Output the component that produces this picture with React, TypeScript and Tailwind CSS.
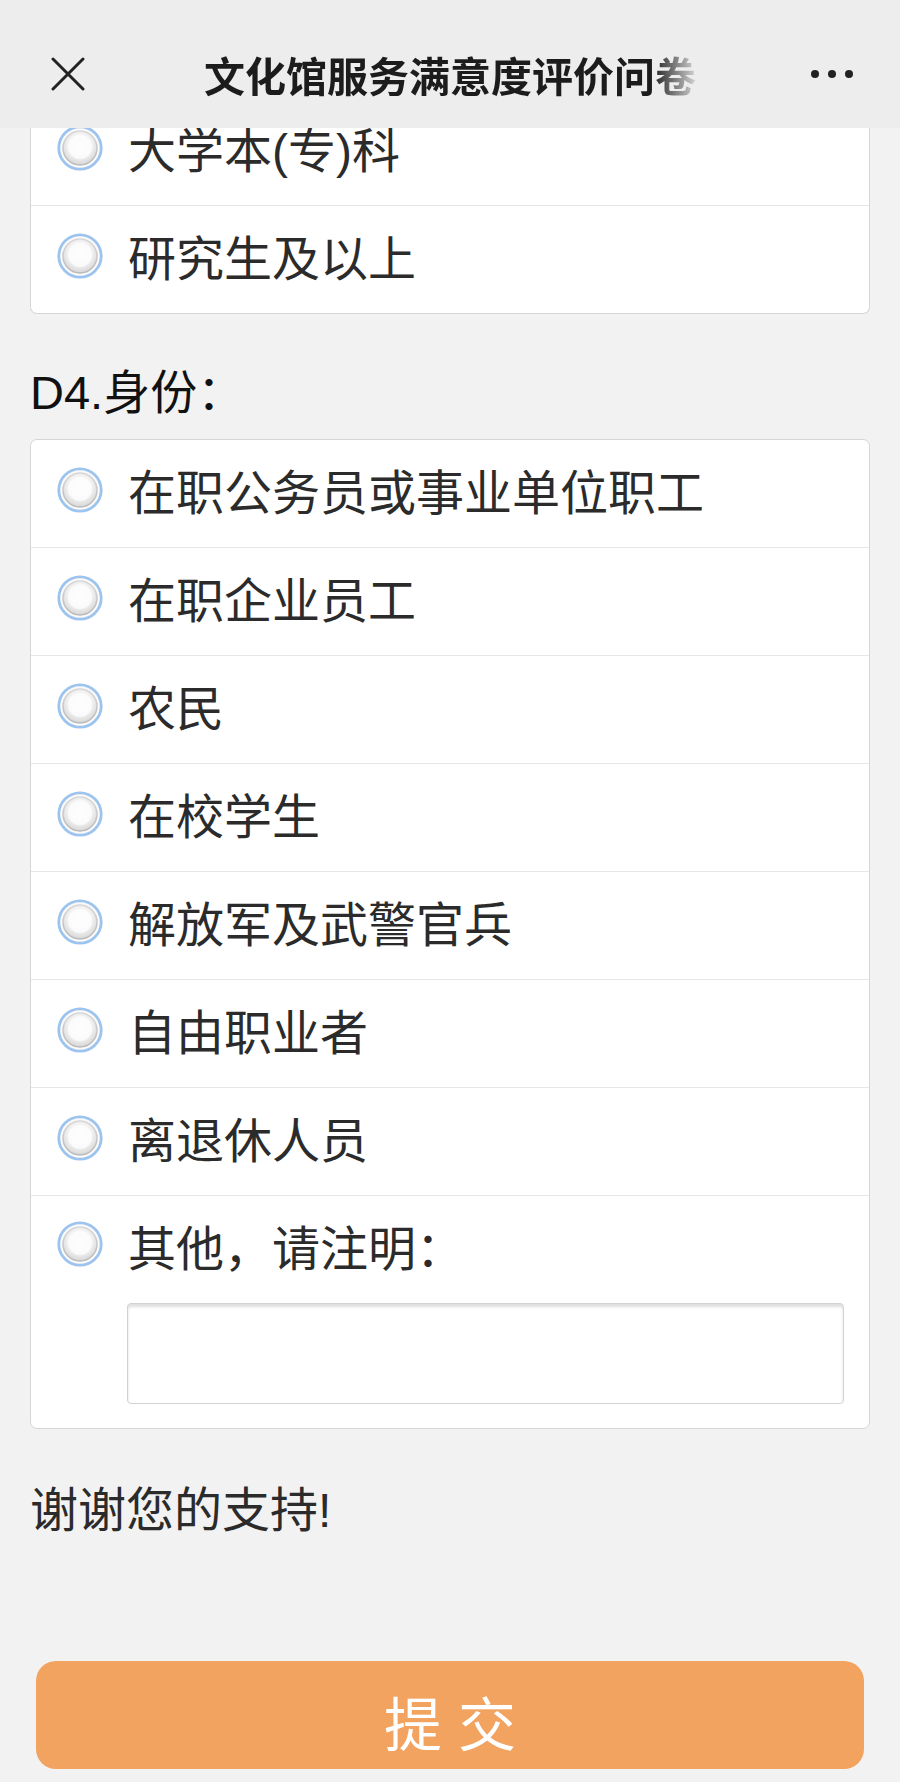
import { useId } from "react"

const firstOptions = ["大学本(专)科", "研究生及以上"]

const identityOptions = [
  "在职公务员或事业单位职工",
  "在职企业员工",
  "农民",
  "在校学生",
  "解放军及武警官兵",
  "自由职业者",
  "离退休人员",
]

function Radio() {
  const id = useId()
  return (
    <svg width="46" height="46" viewBox="0 0 46 46" className="shrink-0">
      <defs>
        <radialGradient id={`fill-${id}`} cx="50%" cy="42%" r="58%">
          <stop offset="0%" stopColor="#ffffff" />
          <stop offset="55%" stopColor="#f6f6f6" />
          <stop offset="100%" stopColor="#d6d6d6" />
        </radialGradient>
        <linearGradient id={`edge-${id}`} x1="0" y1="0" x2="0" y2="1">
          <stop offset="0%" stopColor="#d8d8d8" />
          <stop offset="100%" stopColor="#b9b9b9" />
        </linearGradient>
      </defs>
      <circle cx="23" cy="23" r="21.2" fill="#fbfbfb" stroke="#9dc4ee" strokeWidth="2.8" />
      <circle cx="23" cy="23" r="17" fill={`url(#fill-${id})`} stroke={`url(#edge-${id})`} strokeWidth="1.5" />
      <circle cx="23" cy="22" r="12" fill="#fcfcfc" opacity="0.8" />
    </svg>
  )
}

function OptionRow({ label, last }: { label: string; last?: boolean }) {
  return (
    <div
      className={`flex items-center pl-[26px] ${last ? "h-[107px]" : "h-[108px] border-b border-[#e6e6e6]"}`}
    >
      <div className="mb-[8px]">
        <Radio />
      </div>
      <span className="ml-[25px] text-[48px] leading-[48px] text-[#2b2b2b]">{label}</span>
    </div>
  )
}

export default function App() {
  return (
    <div
      className="flex min-h-[1782px] w-full flex-col bg-[#f2f2f2]"
      style={{ fontFamily: '"Liberation Sans", "Noto Sans CJK SC", sans-serif' }}
    >
      {/* top bar */}
      <header className="relative z-10 flex h-[128px] shrink-0 items-center bg-[#ededed] pt-[20px]">
        <div className="flex w-[120px] justify-start pl-[51px]">
          <svg width="34" height="34" viewBox="0 0 34 34" fill="none" stroke="#222" strokeWidth="3" strokeLinecap="round">
            <path d="M2 2L32 32" />
            <path d="M32 2L2 32" />
          </svg>
        </div>
        <div className="flex flex-1 justify-center">
          <span
            className="inline-block text-[41px] font-bold leading-[48px] text-[#1c1c1c] [mask-image:linear-gradient(to_right,#000_91%,rgba(0,0,0,0.12)_100%)]"
            style={{ fontFamily: '"Noto Sans CJK SC", sans-serif' }}
          >
            文化馆服务满意度评价问卷
          </span>
        </div>
        <div className="flex w-[120px] items-center justify-end gap-[9px] pr-[47px]">
          <span className="h-[8px] w-[8px] rounded-full bg-[#222]" />
          <span className="h-[8px] w-[8px] rounded-full bg-[#222]" />
          <span className="h-[8px] w-[8px] rounded-full bg-[#222]" />
        </div>
      </header>

      <main className="flex flex-1 flex-col overflow-hidden px-[30px]">
        {/* previous question, scrolled partly under the bar */}
        <div className="-mt-[30px] rounded-b-[7px] border-x border-b border-[#d6d6d6] bg-white">
          {firstOptions.map((o, i) => (
            <OptionRow key={o} label={o} last={i === firstOptions.length - 1} />
          ))}
        </div>

        <h2 className="pb-[23px] pt-[55px] text-[47px] leading-[47px] text-[#111]">D4.身份：</h2>

        <div className="rounded-[7px] border border-[#d6d6d6] bg-white">
          {identityOptions.map((o) => (
            <OptionRow key={o} label={o} />
          ))}
          <div className="pb-[24px]">
            <div className="flex h-[107px] items-center pl-[26px]">
              <div className="mb-[12px]">
                <Radio />
              </div>
              <span className="ml-[25px] text-[48px] leading-[48px] text-[#2b2b2b]">其他，请注明：</span>
            </div>
            <div className="ml-[96px] mr-[25px] h-[101px] rounded-[4px] border border-[#d2d2d2] bg-white shadow-[inset_0_3px_3px_rgba(0,0,0,0.13)]" />
          </div>
        </div>

        <p className="mt-[58px] text-[48px] leading-[48px] text-[#2b2b2b]">谢谢您的支持!</p>
      </main>

      <div className="px-[36px] pb-[13px] pt-[34px]">
        <button className="flex h-[108px] w-full items-center justify-center rounded-[20px] bg-[#f2a360] pt-[22px] text-[58px] leading-[58px] text-white">
          提 交
        </button>
      </div>
    </div>
  )
}
